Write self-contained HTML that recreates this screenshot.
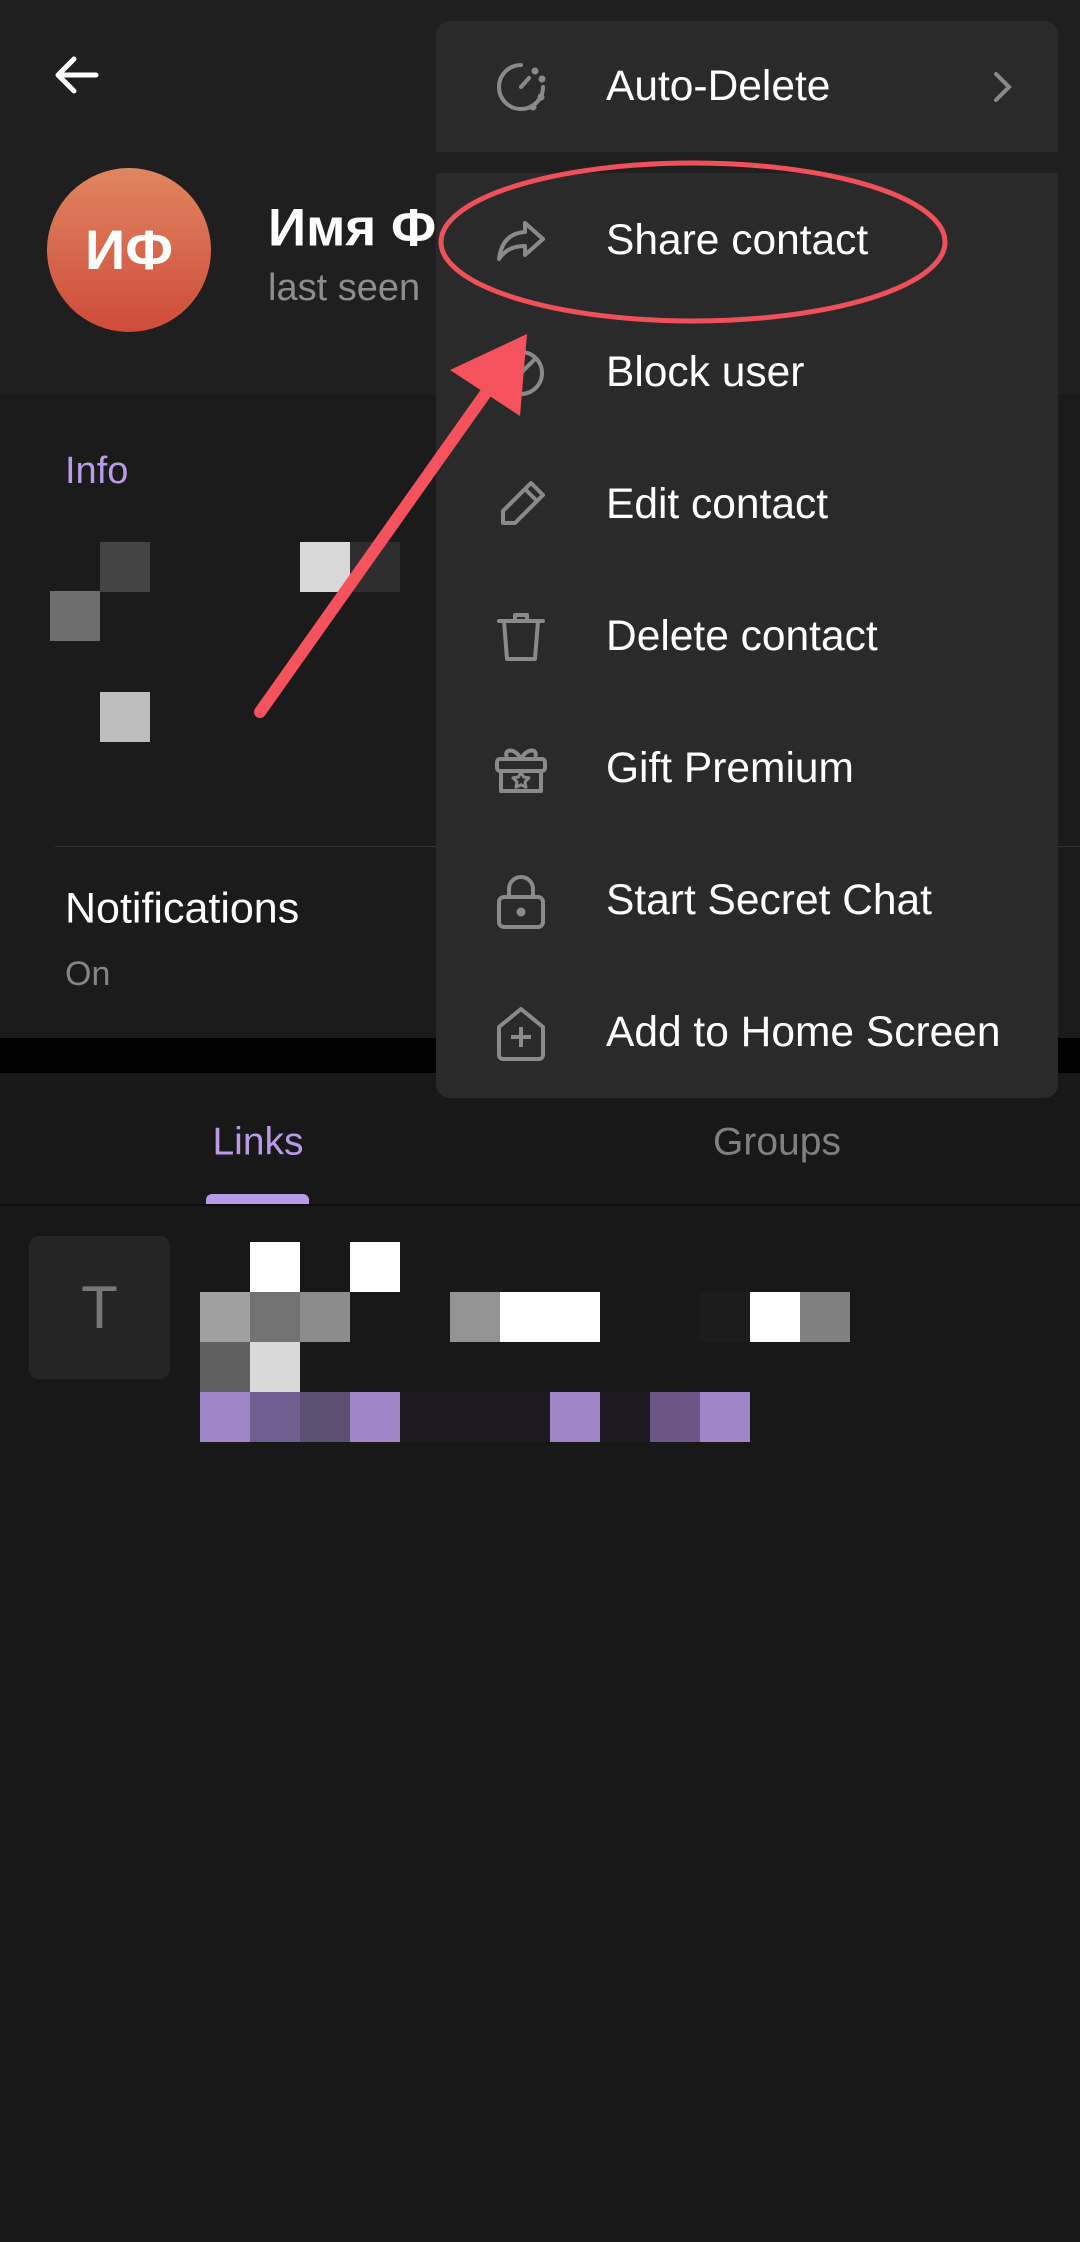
<!DOCTYPE html>
<html><head><meta charset="utf-8"><style>
*{margin:0;padding:0;box-sizing:border-box}
body{width:1080px;height:2242px;background:#181818;font-family:"Liberation Sans","Noto Sans CJK SC",sans-serif;position:relative;overflow:hidden;color:#fff}
.a{position:absolute}
.t{position:absolute;white-space:nowrap;line-height:1;transform:translateY(-50%)}
.b{position:absolute;width:50px;height:50px}
.mi{position:absolute;left:0;width:622px;height:132px}
.mi .lbl{position:absolute;left:170px;top:50%;transform:translateY(-50%);font-size:42.5px;color:#fff;white-space:nowrap}
.mi svg{position:absolute;left:57px;top:50%;transform:translateY(-50%)}
</style></head><body>
<div class="a" style="left:0;top:0;width:1080px;height:394px;background:#1f1f1f"></div>
<svg class="a" style="left:52px;top:55px" width="48" height="40" viewBox="0 0 48 40"><path d="M44 20H6M22 4L6 20l16 16" stroke="#fff" stroke-width="5" fill="none" stroke-linecap="round" stroke-linejoin="round"/></svg>
<div class="a" style="left:47px;top:168px;width:164px;height:164px;border-radius:50%;background:linear-gradient(#e08660,#cf4b3a)"></div>
<div class="t" style="left:47px;width:164px;text-align:center;top:250px;font-size:56px;font-weight:bold">ИФ</div>
<div class="t" style="left:268px;top:228px;font-size:53px;font-weight:bold">Имя Ф</div>
<div class="t" style="left:268px;top:288px;font-size:38px;color:#8d8d8d">last seen</div>
<div class="a" style="left:0;top:394px;width:1080px;height:644px;background:#1b1b1b"></div>
<div class="t" style="left:65px;top:471px;font-size:38px;color:#b99ae6">Info</div>
<div class="b" style="left:100px;top:542px;background:#444"></div>
<div class="b" style="left:50px;top:591px;background:#6e6e6e"></div>
<div class="b" style="left:300px;top:542px;background:#d8d8d8"></div>
<div class="b" style="left:350px;top:542px;background:#2e2e2e"></div>
<div class="b" style="left:100px;top:692px;background:#bdbdbd"></div>
<div class="a" style="left:55px;top:846px;width:1025px;height:1px;background:#333"></div>
<div class="t" style="left:65px;top:909px;font-size:43px">Notifications</div>
<div class="t" style="left:65px;top:974px;font-size:34px;color:#858585">On</div>
<div class="a" style="left:0;top:1038px;width:1080px;height:35px;background:#000"></div>
<div class="t" style="left:198px;width:120px;text-align:center;top:1142px;font-size:39px;color:#b99ae6">Links</div>
<div class="t" style="left:697px;width:160px;text-align:center;top:1142px;font-size:39px;color:#808080">Groups</div>
<div class="a" style="left:206px;top:1194px;width:103px;height:11px;background:#b99ae6;border-radius:6px 6px 0 0"></div>
<div class="a" style="left:0;top:1204px;width:1080px;height:2px;background:#0c0c0c"></div>
<div class="a" style="left:29px;top:1236px;width:141px;height:143px;background:#252525;border-radius:10px"></div>
<div class="t" style="left:29px;width:141px;text-align:center;top:1308px;font-size:60px;color:#777">T</div>
<div class="b" style="left:250px;top:1242px;background:#fff"></div>
<div class="b" style="left:350px;top:1242px;background:#fff"></div>
<div class="b" style="left:200px;top:1292px;background:#a0a0a0"></div>
<div class="b" style="left:250px;top:1292px;background:#727272"></div>
<div class="b" style="left:300px;top:1292px;background:#8c8c8c"></div>
<div class="b" style="left:450px;top:1292px;background:#939393"></div>
<div class="b" style="left:500px;top:1292px;width:100px;background:#fff"></div>
<div class="b" style="left:700px;top:1292px;background:#1c1c1c"></div>
<div class="b" style="left:750px;top:1292px;background:#fff"></div>
<div class="b" style="left:800px;top:1292px;background:#808080"></div>
<div class="b" style="left:200px;top:1342px;background:#606060"></div>
<div class="b" style="left:250px;top:1342px;background:#d9d9d9"></div>
<div class="b" style="left:200px;top:1392px;background:#a086c8"></div>
<div class="b" style="left:250px;top:1392px;background:#705e90"></div>
<div class="b" style="left:300px;top:1392px;background:#5c4f70"></div>
<div class="b" style="left:350px;top:1392px;background:#a086c8"></div>
<div class="b" style="left:400px;top:1392px;width:150px;background:#1c1a20"></div>
<div class="b" style="left:550px;top:1392px;background:#9f85c6"></div>
<div class="b" style="left:600px;top:1392px;background:#1c1a20"></div>
<div class="b" style="left:650px;top:1392px;background:#6a5786"></div>
<div class="b" style="left:700px;top:1392px;background:#a086c8"></div>

<div class="a" style="left:436px;top:21px;width:622px;height:1077px;background:#2a2a2a;border-radius:14px;overflow:hidden">
 <div class="a" style="left:0;top:131px;width:622px;height:21px;background:#1f1f1f"></div>
 <div class="mi" style="top:0;height:131px">
  <svg width="56" height="56" viewBox="0 0 56 56" fill="none" stroke="#8a8a8a" stroke-width="4" stroke-linecap="round"><path d="M28 6A22 22 0 1 0 50 28" /><path d="M28 28l8-9"/><circle cx="42" cy="12" r="1.5" fill="#8a8a8a"/><circle cx="49" cy="20" r="1.5" fill="#8a8a8a"/><circle cx="48" cy="38" r="1.5" fill="#8a8a8a"/><circle cx="40" cy="48" r="1.5" fill="#8a8a8a"/></svg>
  <div class="lbl">Auto-Delete</div>
  <svg style="left:555px" width="24" height="36" viewBox="0 0 24 36"><path d="M5 5l13 13L5 31" stroke="#8a8a8a" stroke-width="4" fill="none" stroke-linecap="round"/></svg>
 </div>
 <div class="mi" style="top:154px"><svg width="56" height="56" viewBox="0 0 56 56" fill="none" stroke="#8a8a8a" stroke-width="4" stroke-linejoin="round"><path d="M32 10l18 16-18 16V33C20 33 12 37 6 46 8 30 16 20 32 19z"/></svg><div class="lbl">Share contact</div></div>
 <div class="mi" style="top:286px"><svg width="56" height="56" viewBox="0 0 56 56" fill="none" stroke="#8a8a8a" stroke-width="4"><circle cx="28" cy="28" r="21"/><path d="M13 43L43 13"/></svg><div class="lbl">Block user</div></div>
 <div class="mi" style="top:418px"><svg width="56" height="56" viewBox="0 0 56 56" fill="none" stroke="#8a8a8a" stroke-width="4" stroke-linejoin="round"><path d="M38 6l12 12-28 28H10V34z"/><path d="M32 12l12 12"/></svg><div class="lbl">Edit contact</div></div>
 <div class="mi" style="top:550px"><svg width="56" height="56" viewBox="0 0 56 56" fill="none" stroke="#8a8a8a" stroke-width="4" stroke-linejoin="round" stroke-linecap="round"><path d="M6 12h44M22 12V6h12v6M11 12l3 38h28l3-38"/></svg><div class="lbl">Delete contact</div></div>
 <div class="mi" style="top:682px"><svg width="56" height="56" viewBox="0 0 56 56" fill="none" stroke="#8a8a8a" stroke-width="4" stroke-linejoin="round"><rect x="4" y="18" width="48" height="12" rx="3"/><path d="M8 30v20h40V30M28 18c-6-12-18-10-14-2M28 18c6-12 18-10 14-2"/><path d="M28 31l2.5 5 5.5 .8-4 4 1 5.5-5-2.6-5 2.6 1-5.5-4-4 5.5-.8z" stroke-width="3"/></svg><div class="lbl">Gift Premium</div></div>
 <div class="mi" style="top:814px"><svg width="56" height="56" viewBox="0 0 56 56" fill="none" stroke="#8a8a8a" stroke-width="4"><rect x="6" y="24" width="44" height="30" rx="5"/><path d="M16 24v-8a12 12 0 0 1 24 0v8"/><circle cx="28" cy="39" r="2.5" fill="#8a8a8a"/></svg><div class="lbl">Start Secret Chat</div></div>
 <div class="mi" style="top:946px"><svg width="56" height="56" viewBox="0 0 56 56" fill="none" stroke="#8a8a8a" stroke-width="4" stroke-linejoin="round"><path d="M6 22L28 4l22 18v28a4 4 0 0 1-4 4H10a4 4 0 0 1-4-4z"/><path d="M28 22v20M18 32h20"/></svg><div class="lbl">Add to Home Screen</div></div>
</div>

<svg class="a" style="left:0;top:0" width="1080" height="1100">
 <ellipse cx="693" cy="242" rx="252" ry="79" fill="none" stroke="#f0505a" stroke-width="5"/>
 <path d="M260 712L495 380" stroke="#f5525d" stroke-width="12" stroke-linecap="round"/>
 <path d="M527 334L450 370 520 416z" fill="#f5525d"/>
</svg>
</body></html>
